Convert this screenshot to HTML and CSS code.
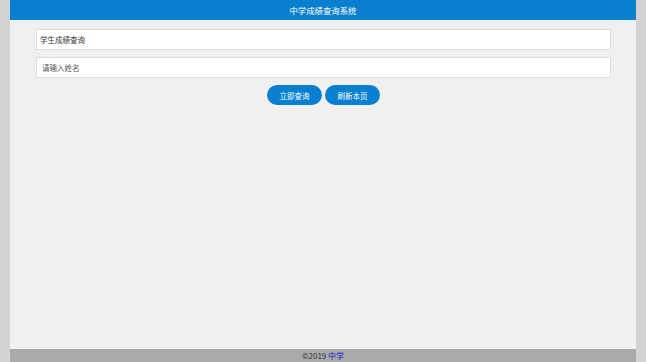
FILE: index.html
```html
<!DOCTYPE html>
<html lang="zh-CN">
<head>
  <meta charset="UTF-8" />
  <meta name="viewport" content="width=device-width, initial-scale=1" />
  <title>中学成绩查询系统</title>
  <link rel="stylesheet" href="styles.css">
</head>
<body>
  <div class="page">
    <header class="top-bar">中学成绩查询系统</header>
    <main class="query">
      <div class="query-title">学生成绩查询</div>
      <input class="query-input" type="text" placeholder="请输入姓名" autocomplete="off" />
      <div class="query-actions">
        <button class="btn">立即查询</button>
        <button class="btn">刷新本页</button>
      </div>
    </main>
    <footer class="foot">©2019 <a href="#">中学</a></footer>
  </div>
</body>
</html>
```

FILE: styles.css
```css
* {
  box-sizing: border-box;
  margin: 0;
  padding: 0;
  font-family: "Noto Sans CJK SC", "Liberation Sans", sans-serif;
}
body {
  background: #d3d3d3;
  color: #333;
}
.page {
  width: 626px;
  min-height: 100vh;
  margin: 0 auto;
  background: #f0f0f0;
  display: flex;
  flex-direction: column;
}

/* ───── Header ───── */
.top-bar {
  height: 20px;
  line-height: 20px;
  background: #0880cf;
  color: #fff;
  text-align: center;
  font-size: 8.4px;
}

/* ───── Query Form ───── */
.query {
  flex: 1;
  padding: 9px 25px 0 26px;
  display: flex;
  flex-direction: column;
  gap: 7px;
}
.query-title,
.query-input {
  height: 21px;
  background: #fff;
  border: 1px solid #dedede;
  font-size: 7.5px;
  line-height: 19px;
}
.query-title {
  padding-left: 3px;
  color: #333;
}
.query-input {
  padding-left: 5px;
  outline: none;
}
.query-input::placeholder { color: #555; }

.query-actions {
  display: flex;
  justify-content: center;
  gap: 3px;
}
.btn {
  width: 55px;
  height: 20px;
  border: none;
  border-radius: 10px;
  background: #0880cf;
  color: #fff;
  font-size: 7.5px;
  cursor: pointer;
}

/* ───── Footer ───── */
.foot {
  height: 13px;
  line-height: 13px;
  background: #aaa;
  text-align: center;
  font-size: 8px;
  color: #333;
}
.foot a {
  color: #1a1acc;
  text-decoration: none;
}
```
